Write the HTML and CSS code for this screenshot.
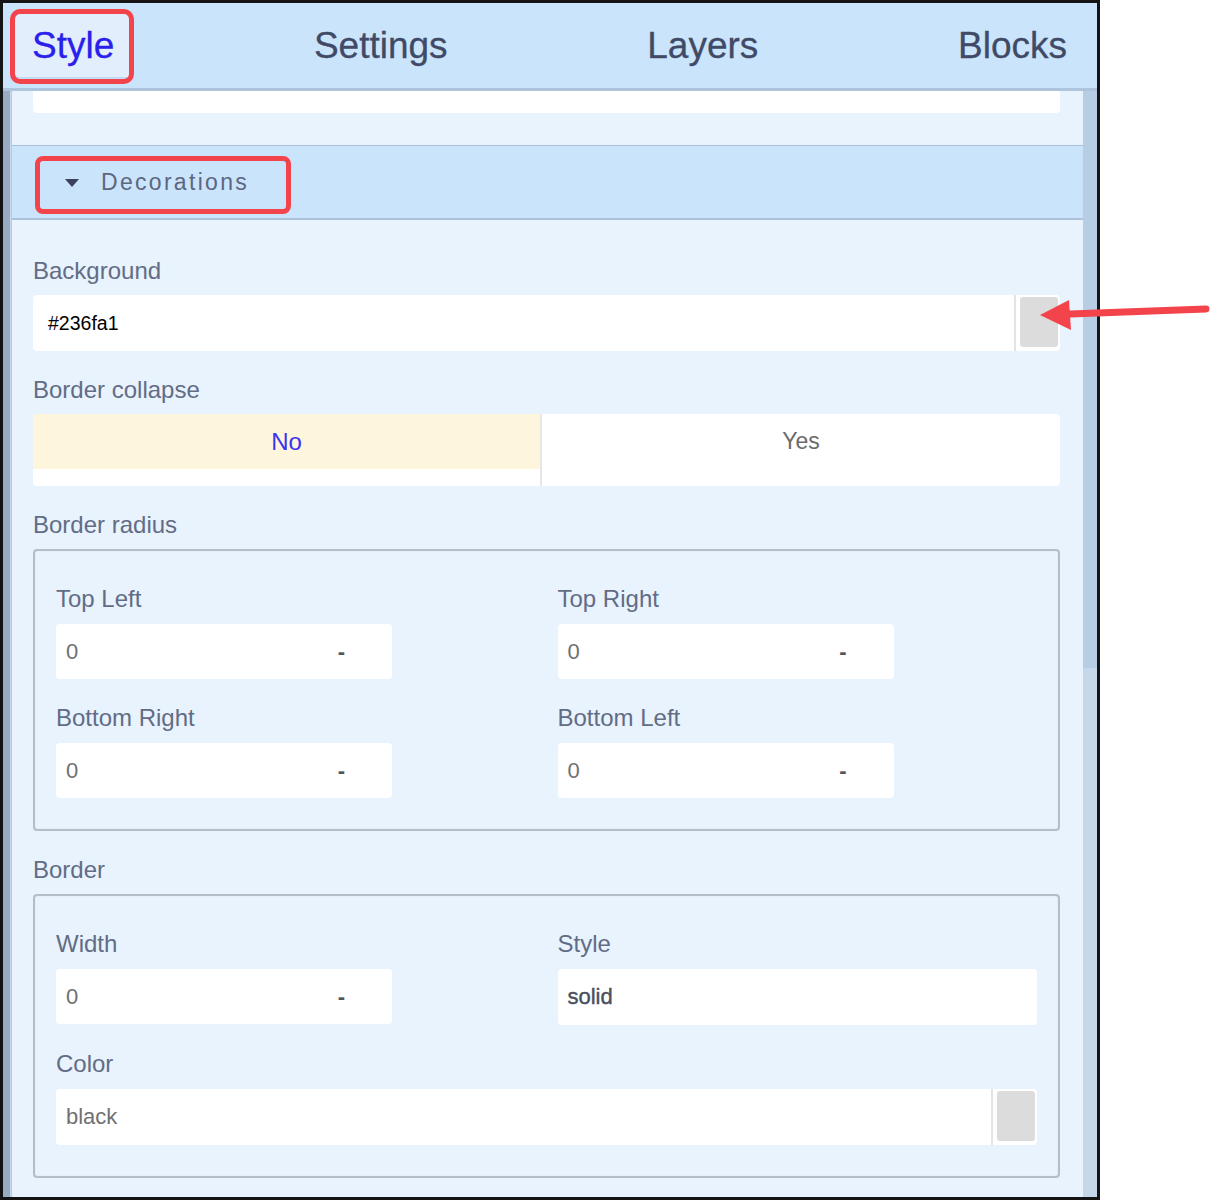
FILE: index.html
```html
<!DOCTYPE html>
<html lang="en">
<head>
<meta charset="utf-8">
<title>Style panel</title>
<link rel="stylesheet" href="styles.css">
</head>
<body>
<div class="panel">
  <nav class="tabs">
    <div class="tab active">Style</div>
    <div class="tab">Settings</div>
    <div class="tab">Layers</div>
    <div class="tab">Blocks</div>
  </nav>
  <div class="body">
    <div class="edge"><div class="edge-thumb"></div></div>
    <div class="content">
      <div class="prev-sector"><div class="prev-bar"></div></div>
      <div class="sector-head"><span class="caret"></span><span class="sector-title">Decorations</span></div>
      <div class="sector-body">
        <div class="field">
          <div class="label">Background</div>
          <div class="input color-input">
            <span class="value hex">#236fa1</span>
            <span class="swatch-wrap"><span class="swatch"></span></span>
          </div>
        </div>
        <div class="field">
          <div class="label">Border collapse</div>
          <div class="toggle">
            <div class="opt on"><span class="opt-btn">No</span></div>
            <div class="opt"><span class="opt-btn">Yes</span></div>
          </div>
        </div>
        <div class="field">
          <div class="label">Border radius</div>
          <div class="group">
            <div class="field">
              <div class="label">Top Left</div>
              <div class="input num"><span class="value">0</span><span class="unit">-</span></div>
            </div>
            <div class="field">
              <div class="label">Top Right</div>
              <div class="input num"><span class="value">0</span><span class="unit">-</span></div>
            </div>
            <div class="field">
              <div class="label">Bottom Right</div>
              <div class="input num"><span class="value">0</span><span class="unit">-</span></div>
            </div>
            <div class="field">
              <div class="label">Bottom Left</div>
              <div class="input num"><span class="value">0</span><span class="unit">-</span></div>
            </div>
          </div>
        </div>
        <div class="field">
          <div class="label">Border</div>
          <div class="group">
            <div class="field">
              <div class="label">Width</div>
              <div class="input num"><span class="value">0</span><span class="unit">-</span></div>
            </div>
            <div class="field">
              <div class="label">Style</div>
              <div class="input"><span class="value strong">solid</span></div>
            </div>
            <div class="field span2">
              <div class="label">Color</div>
              <div class="input color-input">
                <span class="value">black</span>
                <span class="swatch-wrap"><span class="swatch"></span></span>
              </div>
            </div>
          </div>
        </div>
      </div>
    </div>
    <div class="scrollbar"><div class="thumb"></div></div>
  </div>

  <div class="note note-tab"></div>
  <div class="note note-head"></div>
</div>
<svg class="arrow" width="180" height="40" viewBox="0 0 180 40" aria-hidden="true">
  <path d="M32 21 L168 16" stroke="#f2444a" stroke-width="7" stroke-linecap="round" fill="none"/>
  <path d="M2 22 L31 7 L33 37 Z" fill="#f2444a"/>
</svg>
</body>
</html>
```

FILE: styles.css
```css
* { box-sizing: border-box; }

html, body {
  margin: 0;
  padding: 0;
  background: #ffffff;
}

body {
  position: relative;
  width: 1223px;
  height: 1200px;
  overflow: hidden;
  font-family: "Liberation Sans", Arial, sans-serif;
}

.panel {
  position: relative;
  width: 1100px;
  height: 1200px;
  border: 3px solid #141414;
  background: #e8f3fd;
  display: flex;
  flex-direction: column;
  overflow: hidden;
}

/* Tabs */
.tabs {
  height: 88px;
  flex: none;
  background: #cae4fc;
  border-bottom: 3px solid #aec4dc;
  display: flex;
  justify-content: space-between;
  align-items: center;
  padding: 0 13px 0 12px;
}

.tab {
  height: 63px;
  display: flex;
  align-items: center;
  padding: 0 17px;
  font-size: 37px;
  color: #404a66;
  border-radius: 4px;
  -webkit-text-stroke: 0.3px currentColor;
}

.tab.active {
  color: #2a20ec;
  background: #e2eefb;
  box-shadow: 0 0 3px rgba(120, 140, 170, 0.35);
}

/* Body */
.body {
  flex: 1;
  display: flex;
  min-height: 0;
}

.edge {
  width: 9px;
  flex: none;
  background: #c9d9ea;
  border-right: 1px solid #b8cadd;
  position: relative;
}

.edge-thumb {
  width: 7px;
  height: 100%;
  background: #97abc2;
}

.content {
  flex: 1;
  min-width: 0;
}

.scrollbar {
  width: 14px;
  flex: none;
  background: #c5d8ea;
}

.thumb {
  height: 577px;
  background: #b6cde4;
}

.prev-sector {
  height: 55px;
  padding: 0 23px 0 21px;
  border-bottom: 1px solid #a9bfd7;
}

.prev-bar {
  height: 22px;
  background: #ffffff;
  border-radius: 0 0 4px 4px;
}

.sector-head {
  height: 74px;
  background: #cae4fc;
  border-bottom: 2px solid #adc2d9;
  display: flex;
  align-items: center;
  padding-left: 53px;
}

.caret {
  width: 0;
  height: 0;
  border-left: 7px solid transparent;
  border-right: 7px solid transparent;
  border-top: 8px solid #3b4259;
  margin-right: 22px;
  margin-top: 1px;
}

.sector-title {
  font-size: 23px;
  letter-spacing: 2.3px;
  color: #5d6680;
}

.sector-body {
  padding: 37px 23px 20px 21px;
  display: flex;
  flex-direction: column;
  gap: 25px;
}

.field {
  display: flex;
  flex-direction: column;
}

.label {
  height: 28px;
  line-height: 28px;
  font-size: 24px;
  color: #626c86;
  margin-bottom: 10px;
}

.input {
  height: 56px;
  background: #ffffff;
  border-radius: 4px;
  display: flex;
  align-items: center;
  padding-left: 10px;
}

.value {
  flex: 1;
  font-size: 22px;
  color: #707070;
}

.value.hex {
  font-size: 19.5px;
  color: #000000;
  padding-left: 5px;
}

.value.strong {
  color: #4a4f5f;
  -webkit-text-stroke: 0.4px #4a4f5f;
}

.unit {
  font-size: 22px;
  color: #555;
  margin-right: 47px;
  font-weight: bold;
}

.color-input {
  padding-right: 0;
}

.swatch-wrap {
  align-self: stretch;
  width: 46px;
  flex: none;
  border-left: 2px solid #e3e3e3;
  padding: 2px 2px 4px 4px;
  display: flex;
}

.swatch {
  flex: 1;
  background: #dcdcdc;
  border-radius: 3px;
}

/* Toggle */
.toggle {
  height: 72px;
  background: #ffffff;
  border-radius: 4px;
  display: flex;
  overflow: hidden;
}

.opt {
  flex: 1;
}

.opt.on {
  flex: 0 0 507px;
}

.opt + .opt {
  border-left: 2px solid #e6e6e6;
}

.opt-btn {
  height: 55px;
  display: flex;
  align-items: center;
  justify-content: center;
  font-size: 23px;
  color: #6b6b6b;
}

.opt.on .opt-btn {
  background: #fdf5dc;
  color: #3b33f2;
  font-size: 24px;
}

/* Grouped fieldset */
.group {
  border: 2px solid #b3bec9;
  border-radius: 4px;
  box-shadow: inset 0 0 1px rgba(120, 130, 150, 0.3);
  padding: 34px 21px 31px;
  display: grid;
  grid-template-columns: 1fr 1fr;
  column-gap: 22px;
  row-gap: 25px;
}

.group .input.num {
  width: 336px;
  height: 55px;
}

.group .label {
  margin-bottom: 11px;
}

.span2 {
  grid-column: 1 / 3;
}

/* Annotations */
.note {
  position: absolute;
  border: 5px solid #f2444a;
  border-radius: 10px;
  pointer-events: none;
}

.note-tab {
  left: 7px;
  top: 6px;
  width: 124px;
  height: 75px;
}

.note-head {
  left: 32px;
  top: 153px;
  width: 256px;
  height: 58px;
  border-radius: 8px;
}

.arrow {
  position: absolute;
  left: 1038px;
  top: 293px;
}
```
